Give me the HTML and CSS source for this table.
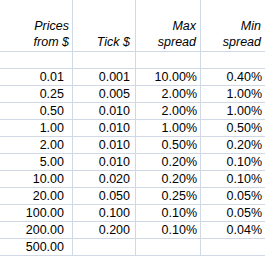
FILE: index.html
```html
<!DOCTYPE html>
<html>
<head>
<meta charset="utf-8">
<link rel="stylesheet" href="styles.css">
</head>
<body>
<div class="sheet">
  <div class="cell head c1">Prices<br>from $</div>
  <div class="cell head c2">Tick $</div>
  <div class="cell head c3">Max<br>spread</div>
  <div class="cell head c4">Min<br>spread</div>

  <div class="cell c1"></div><div class="cell c2"></div><div class="cell c3"></div><div class="cell c4"></div>

  <div class="cell c1">0.01</div><div class="cell c2">0.001</div><div class="cell c3">10.00%</div><div class="cell c4">0.40%</div>
  <div class="cell c1">0.25</div><div class="cell c2">0.005</div><div class="cell c3">2.00%</div><div class="cell c4">1.00%</div>
  <div class="cell c1">0.50</div><div class="cell c2">0.010</div><div class="cell c3">2.00%</div><div class="cell c4">1.00%</div>
  <div class="cell c1">1.00</div><div class="cell c2">0.010</div><div class="cell c3">1.00%</div><div class="cell c4">0.50%</div>
  <div class="cell c1">2.00</div><div class="cell c2">0.010</div><div class="cell c3">0.50%</div><div class="cell c4">0.20%</div>
  <div class="cell c1">5.00</div><div class="cell c2">0.010</div><div class="cell c3">0.20%</div><div class="cell c4">0.10%</div>
  <div class="cell c1">10.00</div><div class="cell c2">0.020</div><div class="cell c3">0.20%</div><div class="cell c4">0.10%</div>
  <div class="cell c1">20.00</div><div class="cell c2">0.050</div><div class="cell c3">0.25%</div><div class="cell c4">0.05%</div>
  <div class="cell c1">100.00</div><div class="cell c2">0.100</div><div class="cell c3">0.10%</div><div class="cell c4">0.05%</div>
  <div class="cell c1">200.00</div><div class="cell c2">0.200</div><div class="cell c3">0.10%</div><div class="cell c4">0.04%</div>
  <div class="cell c1">500.00</div><div class="cell c2"></div><div class="cell c3"></div><div class="cell c4"></div>
</div>
</body>
</html>
```

FILE: styles.css
```css
html, body {
  margin: 0;
  padding: 0;
  background: #ffffff;
}
.sheet {
  display: grid;
  grid-template-columns: 73px 63px 65px 65px;
  grid-template-rows: 52px;
  grid-auto-rows: 17px;
  font-family: "Liberation Sans", Arial, sans-serif;
  font-size: 12.5px;
  line-height: 16px;
  color: #000;
}
.cell {
  box-sizing: border-box;
  border-right: 1px solid #d0d7e5;
  border-bottom: 1px solid #d0d7e5;
  display: flex;
  flex-direction: column;
  justify-content: flex-end;
  align-items: flex-end;
  text-align: right;
  white-space: nowrap;
}
.head {
  font-style: italic;
  padding-bottom: 1px;
}
.c1 { padding-right: 8px; }
.c2 { padding-right: 5px; }
.c3 { padding-right: 3px; }
.c4 { padding-right: 3px; }
.head.c1 { padding-right: 3px; }
.head.c2 { padding-right: 5px; }
.head.c3 { padding-right: 4px; }
.head.c4 { padding-right: 4px; }
```
